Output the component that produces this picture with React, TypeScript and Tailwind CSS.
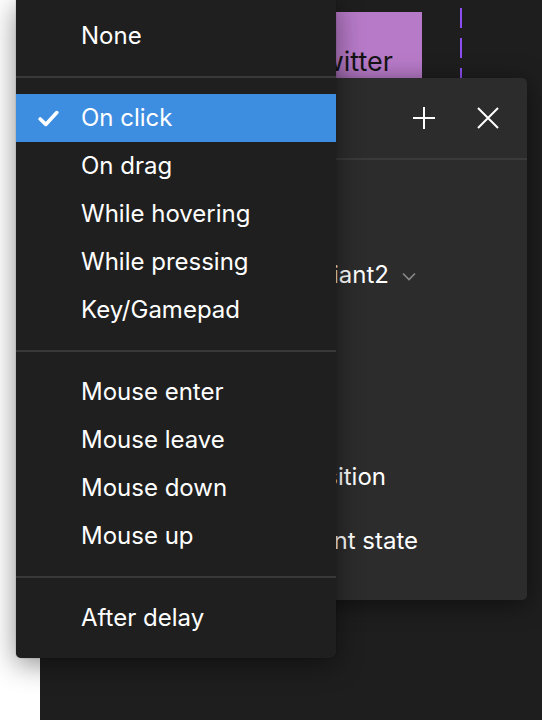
import React from 'react';

type Item = { label: string; checked?: boolean };

const groups: Item[][] = [
  [{ label: 'None' }],
  [
    { label: 'On click', checked: true },
    { label: 'On drag' },
    { label: 'While hovering' },
    { label: 'While pressing' },
    { label: 'Key/Gamepad' },
  ],
  [{ label: 'Mouse enter' }, { label: 'Mouse leave' }, { label: 'Mouse down' }, { label: 'Mouse up' }],
  [{ label: 'After delay' }],
];

const Check = () => (
  <svg width="21" height="17" viewBox="0 0 21 17" fill="none">
    <path d="M2.2 9 L7.8 14.4 L18.8 2.6" stroke="white" strokeWidth="3.6" strokeLinecap="round" strokeLinejoin="round" />
  </svg>
);

const PlusIcon = () => (
  <svg width="24" height="24" viewBox="0 0 24 24" fill="none">
    <path d="M12 1v22M1 12h22" stroke="white" strokeWidth="2" />
  </svg>
);

const CloseIcon = () => (
  <svg width="24" height="24" viewBox="0 0 24 24" fill="none">
    <path d="M2 2l20 20M22 2L2 22" stroke="white" strokeWidth="2" />
  </svg>
);

const Chevron = () => (
  <svg width="14" height="9" viewBox="0 0 14 9" fill="none">
    <path d="M1 1.5l6 6 6-6" stroke="#8a8a8a" strokeWidth="1.6" />
  </svg>
);

const MenuRow = ({ item }: { item: Item }) => (
  <div className={`flex h-12 items-center ${item.checked ? 'bg-[#3d8de0]' : ''}`}>
    <div className="flex w-[65px] shrink-0 justify-end pr-[22px]">{item.checked && <Check />}</div>
    <span className="text-[24px] leading-none text-white">{item.label}</span>
  </div>
);

const TriggerMenu = () => (
  <div className="absolute left-4 top-0 w-[320px] rounded-b-[5px] bg-[#1f1f1f] pt-3 pb-4 shadow-[0_6px_28px_rgba(0,0,0,0.45),0_0_1px_rgba(0,0,0,0.6)]">
    {groups.map((group, gi) => (
      <div key={gi}>
        {gi > 0 && <div className="my-4 h-[2px] bg-[#383838]" />}
        {group.map((item) => (
          <MenuRow key={item.label} item={item} />
        ))}
      </div>
    ))}
  </div>
);

// the left part of the panel lies under the menu, so rows are clipped at the menu edge
const PanelRow = ({ width, children }: { width: number; children: React.ReactNode }) => (
  <div className="flex overflow-hidden whitespace-nowrap justify-end" style={{ width }}>
    <span className="shrink-0">{children}</span>
  </div>
);

const InteractionPanel = () => (
  <div className="absolute left-[190px] top-[78px] h-[522px] w-[297px] rounded-[5px] bg-[#2c2c2c] shadow-[0_4px_24px_rgba(0,0,0,0.5)]">
    <div className="flex h-[80px] items-center justify-end gap-[40px] pr-[27px]">
      <PlusIcon />
      <CloseIcon />
    </div>
    <div className="h-[2px] bg-[#3a3a3a]" />
    <div className="flex flex-col pl-[104px] text-[24px] leading-8 text-white">
      <div className="mt-[99px] flex items-center">
        <PanelRow width={55}>Variant2</PanelRow>
        <div className="ml-[13px] mt-[2px]">
          <Chevron />
        </div>
      </div>
      <div className="mt-[170px]">
        <PanelRow width={52}>Preserve scroll position</PanelRow>
      </div>
      <div className="mt-[32px]">
        <PanelRow width={84}>Reset component state</PanelRow>
      </div>
    </div>
  </div>
);

export default function App() {
  return (
    <div
      className="relative flex h-[720px] w-[542px] overflow-hidden bg-white"
      style={{ fontFamily: 'Inter, "Noto Sans", sans-serif' }}
    >
      <div className="w-10 shrink-0 bg-white" />
      <div className="relative flex-1 bg-[#1e1e1e]">
        <div className="absolute left-[296px] top-3 flex h-[100px] w-[86px] items-start justify-end overflow-hidden bg-[#b77ac8] pr-[29px] pt-[34px]">
          <span className="shrink-0 whitespace-nowrap text-[27px] leading-8 text-[#141414]">Twitter</span>
        </div>
        <div className="absolute left-[420px] top-2 flex h-[80px] flex-col gap-[10px]">
          <div className="h-[21px] w-[2px] bg-[#8b4cf2]" />
          <div className="h-[21px] w-[2px] bg-[#8b4cf2]" />
          <div className="h-[21px] w-[2px] bg-[#8b4cf2]" />
        </div>
        <InteractionPanel />
      </div>
      <TriggerMenu />
    </div>
  );
}
